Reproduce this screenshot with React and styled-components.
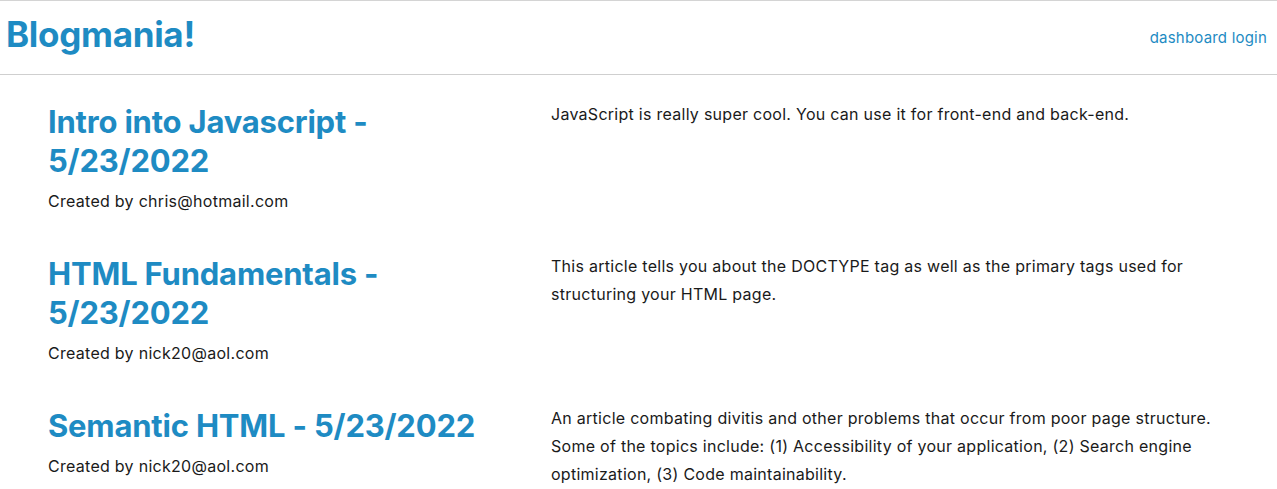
import React from 'react'
import styled, { createGlobalStyle } from 'styled-components'

const GlobalStyle = createGlobalStyle`
  body {
    margin: 0;
    background: #fff;
    font-family: Inter, "Noto Sans", sans-serif;
    color: #1a1a1a;
  }
`

const Header = styled.header`
  display: flex;
  justify-content: space-between;
  align-items: center;
  height: 73px;
  padding: 0 10px 0 6px;
  border-top: 1px solid #d4d4d4;
  border-bottom: 1px solid #cfcfcf;
`

const Brand = styled.h1`
  margin: 0 0 7px;
  font-size: 35px;
  font-weight: 700;
  letter-spacing: -0.3px;
  color: #1e8bc3;
`

const NavLink = styled.a`
  margin-bottom: 1px;
  font-size: 15px;
  letter-spacing: 0.2px;
  color: #1e8bc3;
  text-decoration: none;
`

const List = styled.main`
  padding: 25px 48px 0;
  display: flex;
  flex-direction: column;
  gap: 39px;
`

const Row = styled.article`
  display: grid;
  grid-template-columns: 460px 1fr;
  column-gap: 43px;
  align-items: start;
`

const Title = styled.h2`
  margin: 2px 0 0;
  font-size: 31px;
  line-height: 39px;
  font-weight: 700;
  letter-spacing: -0.2px;
  color: #1e8bc3;
`

const Author = styled.p`
  margin: 9px 0 0;
  font-size: 16px;
  line-height: 24px;
  letter-spacing: 0.28px;
  color: #1a1a1a;
`

const Description = styled.p`
  margin: 0;
  font-size: 16px;
  line-height: 28px;
  letter-spacing: 0.27px;
  color: #1a1a1a;
`

const posts = [
  {
    title: 'Intro into Javascript - 5/23/2022',
    author: 'chris@hotmail.com',
    body: 'JavaScript is really super cool. You can use it for front-end and back-end.',
  },
  {
    title: 'HTML Fundamentals - 5/23/2022',
    author: 'nick20@aol.com',
    body: 'This article tells you about the DOCTYPE tag as well as the primary tags used for structuring your HTML page.',
  },
  {
    title: 'Semantic HTML - 5/23/2022',
    author: 'nick20@aol.com',
    body: 'An article combating divitis and other problems that occur from poor page structure. Some of the topics include: (1) Accessibility of your application, (2) Search engine optimization, (3) Code maintainability.',
  },
]

const App = () => (
  <>
    <GlobalStyle />
    <Header>
      <Brand>Blogmania!</Brand>
      <NavLink href="#">dashboard login</NavLink>
    </Header>
    <List>
      {posts.map(post => (
        <Row key={post.title}>
          <div>
            <Title>{post.title}</Title>
            <Author>Created by {post.author}</Author>
          </div>
          <Description>{post.body}</Description>
        </Row>
      ))}
    </List>
  </>
)

export default App
